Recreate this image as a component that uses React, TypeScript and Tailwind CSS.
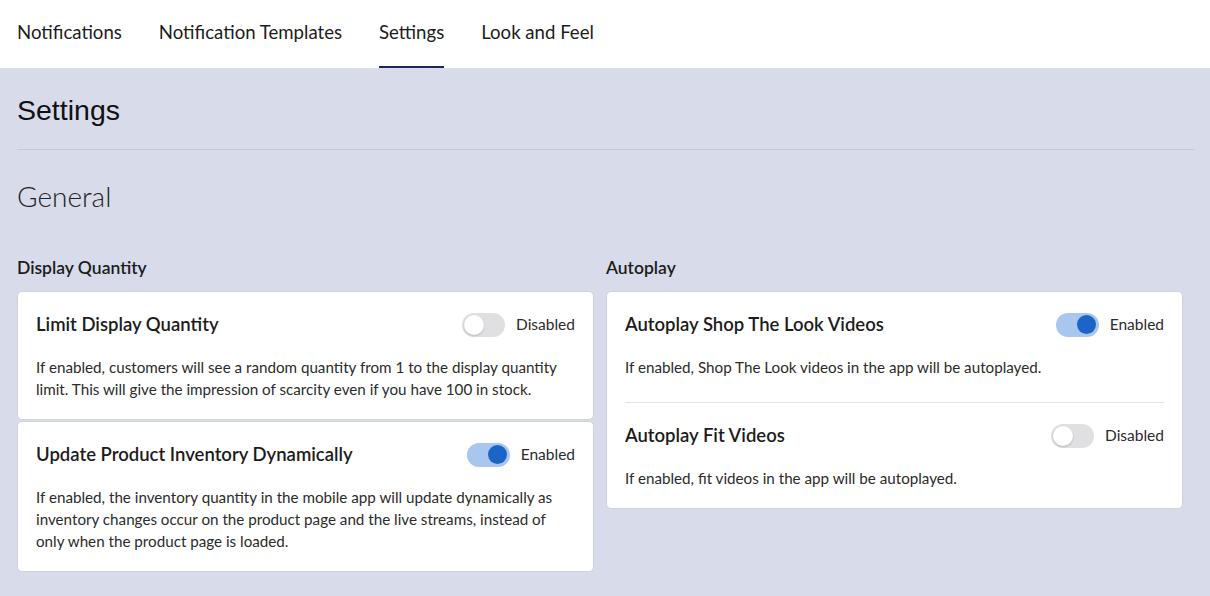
import React from 'react'

const body = { fontFamily: 'Lato, "Open Sans", sans-serif' }

function Toggle({ on }: { on: boolean }) {
  return (
    <div className="flex items-center gap-[11px]">
      <div
        className={
          on
            ? 'flex h-[24px] w-[43px] items-center justify-end rounded-full bg-[#a8c6ee] px-[3px]'
            : 'flex h-[24px] w-[43px] items-center justify-start rounded-full bg-[#e0e0e3] px-[2px]'
        }
      >
        <div
          className={
            on
              ? 'h-[19px] w-[19px] rounded-full bg-[#1b65c6]'
              : 'h-[20px] w-[20px] rounded-full bg-white shadow-[0_1px_2px_rgba(0,0,0,0.2)]'
          }
        />
      </div>
      <span className="text-[15.5px] text-[#2b2b2b]">{on ? 'Enabled' : 'Disabled'}</span>
    </div>
  )
}

function Setting({ title, on, text }: { title: string; on: boolean; text: string }) {
  return (
    <div>
      <div className="flex items-center justify-between">
        <h3 className="text-[18.5px] font-semibold text-[#1c1c1c]">{title}</h3>
        <Toggle on={on} />
      </div>
      <p className="mt-[17px] text-[15.2px] leading-[22px] text-[#2b2b2b]">{text}</p>
    </div>
  )
}

const card = 'rounded-[5px] border border-[#cfd3df] bg-white px-[18px] pt-[19px] pb-[19px]'

export default function App() {
  return (
    <div className="min-h-screen bg-[#d7dbea]" style={body}>
      <nav className="flex h-[68px] items-end gap-[37px] bg-white px-[17px]">
        {['Notifications', 'Notification Templates', 'Settings', 'Look and Feel'].map((t) => (
          <div
            key={t}
            className={
              t === 'Settings'
                ? 'border-b-2 border-[#1b2757] pb-[19px] text-[18.6px] text-[#1c1c1c]'
                : 'border-b-2 border-transparent pb-[19px] text-[18.6px] text-[#1c1c1c]'
            }
          >
            {t}
          </div>
        ))}
      </nav>

      <main className="px-[17px] pb-[24px]">
        <h1 className="pt-[21px] pb-[17px] text-[28.5px] text-[#111]" style={{ fontFamily: '"Liberation Sans", Arial, sans-serif' }}>
          Settings
        </h1>
        <hr className="mr-[-2px] border-t border-[#c3c8d9]" />
        <h2 className="mt-[25px] text-[28px] font-light text-[#222]">General</h2>

        <div className="mt-[38px] grid grid-cols-2 gap-[12px] pr-[10px]">
          <section>
            <h4 className="mb-[10px] text-[17.5px] font-semibold text-[#1c1c1c]">Display Quantity</h4>
            <div className="flex flex-col gap-[1px]">
              <div className={card}>
                <Setting
                  title="Limit Display Quantity"
                  on={false}
                  text="If enabled, customers will see a random quantity from 1 to the display quantity limit. This will give the impression of scarcity even if you have 100 in stock."
                />
              </div>
              <div className={card}>
                <Setting
                  title="Update Product Inventory Dynamically"
                  on={true}
                  text="If enabled, the inventory quantity in the mobile app will update dynamically as inventory changes occur on the product page and the live streams, instead of only when the product page is loaded."
                />
              </div>
            </div>
          </section>

          <section>
            <h4 className="mb-[10px] text-[17.5px] font-semibold text-[#1c1c1c]">Autoplay</h4>
            <div className={card}>
              <Setting
                title="Autoplay Shop The Look Videos"
                on={true}
                text="If enabled, Shop The Look videos in the app will be autoplayed."
              />
              <div className="mt-[24px] mb-[19px] border-t border-[#e4e4e6]" />
              <Setting
                title="Autoplay Fit Videos"
                on={false}
                text="If enabled, fit videos in the app will be autoplayed."
              />
            </div>
          </section>
        </div>
      </main>
    </div>
  )
}
